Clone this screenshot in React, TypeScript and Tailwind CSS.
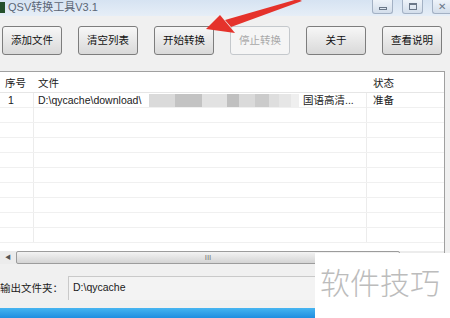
import React from "react";

const buttons = [
  { label: "添加文件" },
  { label: "清空列表" },
  { label: "开始转换" },
  { label: "停止转换", disabled: true },
  { label: "关于" },
  { label: "查看说明" },
];

const blur = [
  { w: 26, c: "#dadada" },
  { w: 27, c: "#c3c3c3" },
  { w: 25, c: "#e2e2e2" },
  { w: 12, c: "#c0c0c0" },
  { w: 16, c: "#dadada" },
  { w: 14, c: "#cbcbcb" },
  { w: 10, c: "#dedede" },
  { w: 12, c: "#e6e6e6" },
  { w: 8, c: "#efefef" },
];

function WinButton({ children }: { children: React.ReactNode }) {
  return (
    <div className="flex h-[14px] w-[21px] items-center justify-center rounded-b-[3px] border border-t-0 border-[#a3b1c4] bg-gradient-to-b from-[#eef3f9] to-[#d3deeb]">
      {children}
    </div>
  );
}

export default function App() {
  const emptyRows = Array.from({ length: 9 });
  return (
    <div
      className="relative flex h-[318px] w-[450px] flex-col overflow-hidden bg-[#f0f0f0] text-[10.5px] text-[#1a1a1a]"
      style={{ fontFamily: '"Liberation Sans", "Noto Sans CJK SC", sans-serif' }}
    >
      {/* title bar */}
      <div className="flex h-[16px] shrink-0 items-start bg-gradient-to-b from-[#d6e3f2] to-[#e6eef7]">
        <div className="mt-[2px] h-[11px] w-[5px] bg-[#24502c]" />
        <span className="ml-[3px] mt-[1px] text-[11px] leading-[13px] text-[#5b6676]">QSV转换工具V3.1</span>
        <div className="ml-auto flex gap-[9px]">
          <WinButton>
            <div className="mt-[3px] h-[3px] w-[8px] border border-[#6a7788]" />
          </WinButton>
          <WinButton>
            <div className="h-[7px] w-[8px] border border-t-2 border-[#6a7788]" />
          </WinButton>
          <div className="flex h-[14px] w-[18px] items-center justify-center rounded-bl-[3px] border border-r-0 border-t-0 border-[#a3b1c4] bg-gradient-to-b from-[#eef3f9] to-[#d3deeb] text-[10px] leading-none text-[#6a7788]">
            ✕
          </div>
        </div>
      </div>

      {/* toolbar */}
      <div className="ml-[2px] mt-[10px] flex h-[29px] shrink-0 gap-[16px]">
        {buttons.map((b) => (
          <div
            key={b.label}
            className={
              b.disabled
                ? "flex w-[60px] items-center justify-center rounded-[3px] border border-[#c4c8cc] bg-[#f5f5f5] text-[#a8a8a8]"
                : "flex w-[60px] items-center justify-center rounded-[3px] border border-[#7d7d7d] bg-gradient-to-b from-[#f7f7f7] to-[#d9d9d9] text-[#111]"
            }
          >
            {b.label}
          </div>
        ))}
      </div>

      {/* list */}
      <div className="mt-[16px] flex h-[180px] w-[445px] shrink-0 flex-col border-r border-t border-[#a0a0a0] bg-white">
        <div className="grid h-[21px] grid-cols-[34px_333px_1fr] items-center border-b border-[#e6e6e6]">
          <span className="pl-[5px] pt-[3px]">序号</span>
          <span className="pl-[4px] pt-[3px]">文件</span>
          <span className="pl-[6px] pt-[3px]">状态</span>
        </div>
        <div className="grid h-[15px] grid-cols-[34px_333px_1fr] items-center border-b border-[#f0f0f0]">
          <span className="h-full border-r border-[#ececec] pl-[8px] leading-[15px]">1</span>
          <div className="flex h-full items-center overflow-hidden border-r border-[#ececec] pl-[4px]">
            <span className="w-[111px] shrink-0 overflow-hidden whitespace-nowrap">D:\qycache\download\</span>
            {blur.map((b, i) => (
              <div key={i} className="h-[13px] shrink-0" style={{ width: b.w, backgroundColor: b.c }} />
            ))}
            <span className="ml-[4px] whitespace-nowrap">国语高清...</span>
          </div>
          <span className="pl-[6px] leading-[15px]">准备</span>
        </div>
        {emptyRows.map((_, i) => (
          <div key={i} className="grid h-[15px] shrink-0 grid-cols-[34px_333px_1fr] border-b border-[#f0f0f0]">
            <span className="border-r border-[#ececec]" />
            <span className="border-r border-[#ececec]" />
            <span />
          </div>
        ))}
      </div>

      {/* horizontal scrollbar */}
      <div className="flex h-[13px] w-[445px] shrink-0 items-stretch border-r border-[#a0a0a0] bg-[#ececec]">
        <div className="flex w-[16px] items-center justify-center text-[6px] text-[#555]">◀</div>
        <div className="flex w-[384px] items-center justify-center rounded-[2px] border border-[#9c9c9c] bg-gradient-to-b from-[#f3f3f3] to-[#d4d4d4] text-[8px] leading-none text-[#777]">
          III
        </div>
      </div>

      {/* output folder */}
      <div className="mt-[12px] flex h-[24px] shrink-0 items-center">
        <span className="w-[68px] shrink-0 pt-[2px]">输出文件夹：</span>
        <div className="flex h-full flex-1 items-start border-l border-t border-[#c9c9c9] bg-[#f3f3f3] pl-[4px] pt-[3px]">
          D:\qycache
        </div>
      </div>

      {/* taskbar strip */}
      <div className="mt-auto h-[10px] shrink-0 bg-gradient-to-b from-[#45b4f0] to-[#1f8ee0]" />

      {/* red arrow annotation */}
      <svg className="pointer-events-none absolute left-0 top-0" width="450" height="60" viewBox="0 0 450 60">
        <polygon points="298,-1 302,1 231,27 225,20" fill="#e5322b" />
        <polygon points="206,29 220,15 235,33" fill="#e5322b" />
      </svg>

      {/* watermark */}
      <div className="absolute left-[315px] top-[253px] flex h-[65px] w-[135px] items-start bg-white pl-[5px] pt-[14px]">
        <span className="whitespace-nowrap text-[30px] font-light leading-[34px] text-[#bcbcbc]">软件技巧</span>
      </div>
    </div>
  );
}
